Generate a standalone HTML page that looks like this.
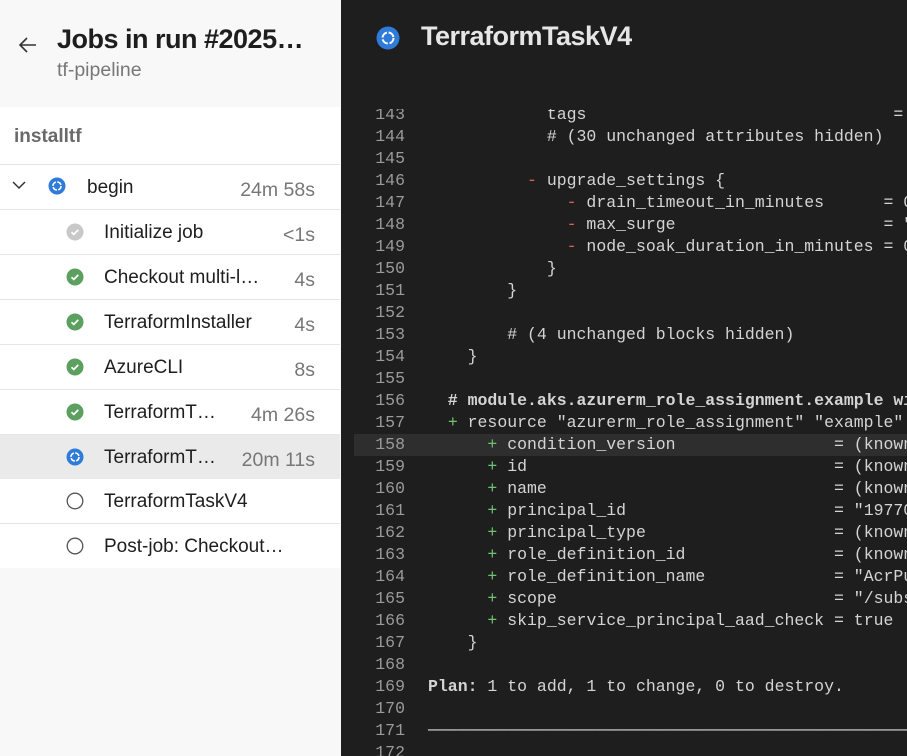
<!DOCTYPE html>
<html><head><style>
*{margin:0;padding:0;box-sizing:border-box}
body{width:907px;height:756px;overflow:hidden;font-family:"Liberation Sans",sans-serif;background:#f8f8f8;position:relative}
.left{position:absolute;left:0;top:0;width:341px;height:756px;background:#f8f8f8}
.title{position:absolute;left:57px;top:24px;font-size:27px;font-weight:bold;color:#1e1e1e;letter-spacing:-0.5px}
.sub{position:absolute;left:57px;top:59px;font-size:19.5px;color:#777}
.back{position:absolute;left:17px;top:34px}
.list{position:absolute;left:0;top:107px;width:340px;height:461px;background:#fff}
.sec{position:absolute;left:14px;top:19px;font-size:19px;font-weight:bold;color:#6a6a6a}
.row{position:absolute;left:0;width:340px;height:45px;border-top:1px solid #e6e6e6}
.row .n{position:absolute;left:104px;top:12px;font-size:19px;color:#1e1e1e;white-space:nowrap}
.row .d{position:absolute;right:25px;top:14px;font-size:19.5px;color:#777}
.row svg{position:absolute;left:66px;top:13px}
.sel{background:#eaeaea}
.right{position:absolute;left:341px;top:0;width:566px;height:756px;background:#1e1e1e;overflow:hidden}
.rt{position:absolute;left:80px;top:21px;font-size:27px;font-weight:bold;color:#e6e6e6;letter-spacing:-0.5px}
.code{position:absolute;left:0;top:109px;width:566px;height:647px;overflow:hidden;font-family:"Liberation Mono","DejaVu Sans Mono",monospace;font-size:16.5px;color:#d4d4d4}
.l{position:absolute;left:0;height:22px;line-height:22px;width:566px;white-space:pre}
.l .num{position:absolute;left:0;width:64px;text-align:right;color:#9b9b9b}
.l .t{position:absolute;left:87px}
.hl{background:#2e2e2e;left:13px!important}
.hl .num{left:-13px}.hl .t{left:74px}
.m{color:#e06060}.p{color:#6fc372}.b{font-weight:bold}
</style></head><body>
<div class="left">
<svg class="back" width="22" height="22" viewBox="0 0 22 22"><path d="M19 11H3M10 4L3 11l7 7" stroke="#333" stroke-width="1.6" fill="none"/></svg>
<div class="title">Jobs in run #2025…</div>
<div class="sub">tf-pipeline</div>
<div class="list">
<div class="sec">installtf</div>
<div class="row" style="top:57px">
<svg style="left:12px;top:16px" width="14" height="10" viewBox="0 0 14 10"><path d="M1 1l6 6 6-6" stroke="#333" stroke-width="1.5" fill="none"/></svg>
<svg style="left:48px;top:12px" width="18" height="18" viewBox="0 0 18 18"><circle cx="9" cy="9" r="8.5" fill="#2f7bd9"/><circle cx="9" cy="9" r="4" stroke="#fff" stroke-width="1.6" fill="none" stroke-dasharray="5 1.3"/></svg>
<span class="n" style="left:87px">begin</span><span class="d">24m 58s</span></div>
<div class="row" style="top:102px"><svg width="18" height="18" viewBox="0 0 18 18"><circle cx="9" cy="9" r="8.5" fill="#c8c8c8"/><path d="M5.5 9.2l2.3 2.2 4.5-4.5" stroke="#fff" stroke-width="1.7" fill="none"/></svg><span class="n">Initialize job</span><span class="d">&lt;1s</span></div>
<div class="row" style="top:147px"><svg width="18" height="18" viewBox="0 0 18 18"><circle cx="9" cy="9" r="8.5" fill="#5ba05e"/><path d="M5.5 9.2l2.3 2.2 4.5-4.5" stroke="#fff" stroke-width="1.7" fill="none"/></svg><span class="n">Checkout multi-l…</span><span class="d">4s</span></div>
<div class="row" style="top:192px"><svg width="18" height="18" viewBox="0 0 18 18"><circle cx="9" cy="9" r="8.5" fill="#5ba05e"/><path d="M5.5 9.2l2.3 2.2 4.5-4.5" stroke="#fff" stroke-width="1.7" fill="none"/></svg><span class="n">TerraformInstaller</span><span class="d">4s</span></div>
<div class="row" style="top:237px"><svg width="18" height="18" viewBox="0 0 18 18"><circle cx="9" cy="9" r="8.5" fill="#5ba05e"/><path d="M5.5 9.2l2.3 2.2 4.5-4.5" stroke="#fff" stroke-width="1.7" fill="none"/></svg><span class="n">AzureCLI</span><span class="d">8s</span></div>
<div class="row" style="top:282px"><svg width="18" height="18" viewBox="0 0 18 18"><circle cx="9" cy="9" r="8.5" fill="#5ba05e"/><path d="M5.5 9.2l2.3 2.2 4.5-4.5" stroke="#fff" stroke-width="1.7" fill="none"/></svg><span class="n">TerraformT…</span><span class="d">4m 26s</span></div>
<div class="row sel" style="top:327px"><svg width="18" height="18" viewBox="0 0 18 18"><circle cx="9" cy="9" r="8.5" fill="#2f7bd9"/><circle cx="9" cy="9" r="4" stroke="#fff" stroke-width="1.6" fill="none" stroke-dasharray="5 1.3"/></svg><span class="n">TerraformT…</span><span class="d">20m 11s</span></div>
<div class="row" style="top:372px;border-top:none"><svg width="18" height="18" viewBox="0 0 18 18"><circle cx="9" cy="9" r="7.8" stroke="#555" stroke-width="1.3" fill="none"/></svg><span class="n">TerraformTaskV4</span></div>
<div class="row" style="top:416px"><svg width="18" height="18" viewBox="0 0 18 18"><circle cx="9" cy="9" r="7.8" stroke="#555" stroke-width="1.3" fill="none"/></svg><span class="n">Post-job: Checkout…</span></div>
</div>
</div>
<div class="right">
<svg style="position:absolute;left:35px;top:26px" width="24" height="24" viewBox="0 0 24 24"><circle cx="12" cy="12" r="11.5" fill="#2f7bd9"/><circle cx="12" cy="12" r="5.5" stroke="#fff" stroke-width="2" fill="none" stroke-dasharray="7 1.8"/></svg>
<div class="rt">TerraformTaskV4</div>
<div class="code">
<div class="l" style="top:-5px"><span class="num">143</span><span class="t">            tags                               = {}</span></div>
<div class="l" style="top:17px"><span class="num">144</span><span class="t">            # (30 unchanged attributes hidden)</span></div>
<div class="l" style="top:39px"><span class="num">145</span></div>
<div class="l" style="top:61px"><span class="num">146</span><span class="t">          <span class="m">-</span> upgrade_settings {</span></div>
<div class="l" style="top:83px"><span class="num">147</span><span class="t">              <span class="m">-</span> drain_timeout_in_minutes      = 0</span></div>
<div class="l" style="top:105px"><span class="num">148</span><span class="t">              <span class="m">-</span> max_surge                     = "</span></div>
<div class="l" style="top:127px"><span class="num">149</span><span class="t">              <span class="m">-</span> node_soak_duration_in_minutes = 0</span></div>
<div class="l" style="top:149px"><span class="num">150</span><span class="t">            }</span></div>
<div class="l" style="top:171px"><span class="num">151</span><span class="t">        }</span></div>
<div class="l" style="top:193px"><span class="num">152</span></div>
<div class="l" style="top:215px"><span class="num">153</span><span class="t">        # (4 unchanged blocks hidden)</span></div>
<div class="l" style="top:237px"><span class="num">154</span><span class="t">    }</span></div>
<div class="l" style="top:259px"><span class="num">155</span></div>
<div class="l" style="top:281px"><span class="num">156</span><span class="t b">  # module.aks.azurerm_role_assignment.example will</span></div>
<div class="l" style="top:303px"><span class="num">157</span><span class="t">  <span class="p">+</span> resource "azurerm_role_assignment" "example" {</span></div>
<div class="l hl" style="top:325px"><span class="num">158</span><span class="t">      <span class="p">+</span> condition_version                = (known</span></div>
<div class="l" style="top:347px"><span class="num">159</span><span class="t">      <span class="p">+</span> id                               = (known</span></div>
<div class="l" style="top:369px"><span class="num">160</span><span class="t">      <span class="p">+</span> name                             = (known</span></div>
<div class="l" style="top:391px"><span class="num">161</span><span class="t">      <span class="p">+</span> principal_id                     = "19770</span></div>
<div class="l" style="top:413px"><span class="num">162</span><span class="t">      <span class="p">+</span> principal_type                   = (known</span></div>
<div class="l" style="top:435px"><span class="num">163</span><span class="t">      <span class="p">+</span> role_definition_id               = (known</span></div>
<div class="l" style="top:457px"><span class="num">164</span><span class="t">      <span class="p">+</span> role_definition_name             = "AcrPu</span></div>
<div class="l" style="top:479px"><span class="num">165</span><span class="t">      <span class="p">+</span> scope                            = "/subs</span></div>
<div class="l" style="top:501px"><span class="num">166</span><span class="t">      <span class="p">+</span> skip_service_principal_aad_check = true</span></div>
<div class="l" style="top:523px"><span class="num">167</span><span class="t">    }</span></div>
<div class="l" style="top:545px"><span class="num">168</span></div>
<div class="l" style="top:567px"><span class="num">169</span><span class="t"><span class="b">Plan:</span> 1 to add, 1 to change, 0 to destroy.</span></div>
<div class="l" style="top:589px"><span class="num">170</span></div>
<div class="l" style="top:611px"><span class="num">171</span><span class="t">────────────────────────────────────────────────────────────</span></div>
<div class="l" style="top:633px"><span class="num">172</span></div>
</div>
</div>
</body></html>
